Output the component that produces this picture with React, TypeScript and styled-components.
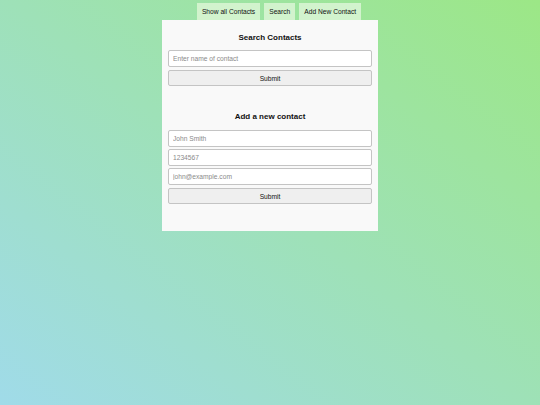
import React from 'react';
import styled, { createGlobalStyle } from 'styled-components';

const GlobalStyle = createGlobalStyle`
  html, body {
    margin: 0;
    padding: 0;
    height: 100%;
  }
  body {
    font-family: "Liberation Sans", Arial, sans-serif;
    background: linear-gradient(38deg, #a0dbe9 0%, #9ce786 100%);
    background-attachment: fixed;
  }
  #root {
    min-height: 100vh;
  }
`;

const Page = styled.div`
  display: flex;
  flex-direction: column;
  align-items: center;
  padding-top: 3px;
`;

const Nav = styled.nav`
  display: flex;
  gap: 4px;
  margin-left: 18px;
`;

const Tab = styled.button`
  height: 17px;
  padding: 0 5px;
  border: none;
  background: #d2f3cd;
  color: #111;
  font-family: "Liberation Sans", Arial, sans-serif;
  font-size: 6.67px;
  cursor: pointer;
`;

const Card = styled.div`
  width: 204px;
  padding: 12px 6px 27px;
  background: #f9f9f9;
  display: flex;
  flex-direction: column;
`;

const Title = styled.h2`
  margin: 0;
  font-size: 8px;
  line-height: 12px;
  font-weight: bold;
  text-align: center;
  color: #111;
`;

const Form = styled.form<{ $spaced?: boolean }>`
  display: flex;
  flex-direction: column;
  gap: ${(p) => (p.$spaced ? '2px' : '3px')};
  margin-top: ${(p) => (p.$spaced ? '25px' : '0')};

  h2 {
    margin-bottom: ${(p) => (p.$spaced ? '5px' : '3px')};
  }
`;

const Input = styled.input`
  box-sizing: border-box;
  height: 17px;
  width: 100%;
  padding: 0 4px;
  border: 1px solid #c4c4c4;
  border-radius: 2px;
  background: #fff;
  font-family: "Liberation Sans", Arial, sans-serif;
  font-size: 6.67px;
  &::placeholder {
    color: #8a8a8a;
  }
`;

const Submit = styled.button<{ $offset?: number }>`
  box-sizing: border-box;
  height: 16px;
  width: 100%;
  margin-top: ${(p) => p.$offset ?? 0}px;
  border: 1px solid #c4c4c4;
  border-radius: 2px;
  background: #efefef;
  color: #111;
  font-family: "Liberation Sans", Arial, sans-serif;
  font-size: 6.67px;
`;

const App = () => {
  return (
    <>
      <GlobalStyle />
      <Page>
        <Nav>
          <Tab>Show all Contacts</Tab>
          <Tab>Search</Tab>
          <Tab>Add New Contact</Tab>
        </Nav>
        <Card>
          <Form onSubmit={(e) => e.preventDefault()}>
            <Title>Search Contacts</Title>
            <Input placeholder="Enter name of contact" />
            <Submit type="submit">Submit</Submit>
          </Form>
          <Form $spaced onSubmit={(e) => e.preventDefault()}>
            <Title>Add a new contact</Title>
            <Input placeholder="John Smith" />
            <Input placeholder="1234567" />
            <Input placeholder="john@example.com" />
            <Submit type="submit" $offset={1}>Submit</Submit>
          </Form>
        </Card>
      </Page>
    </>
  );
};

export default App;
